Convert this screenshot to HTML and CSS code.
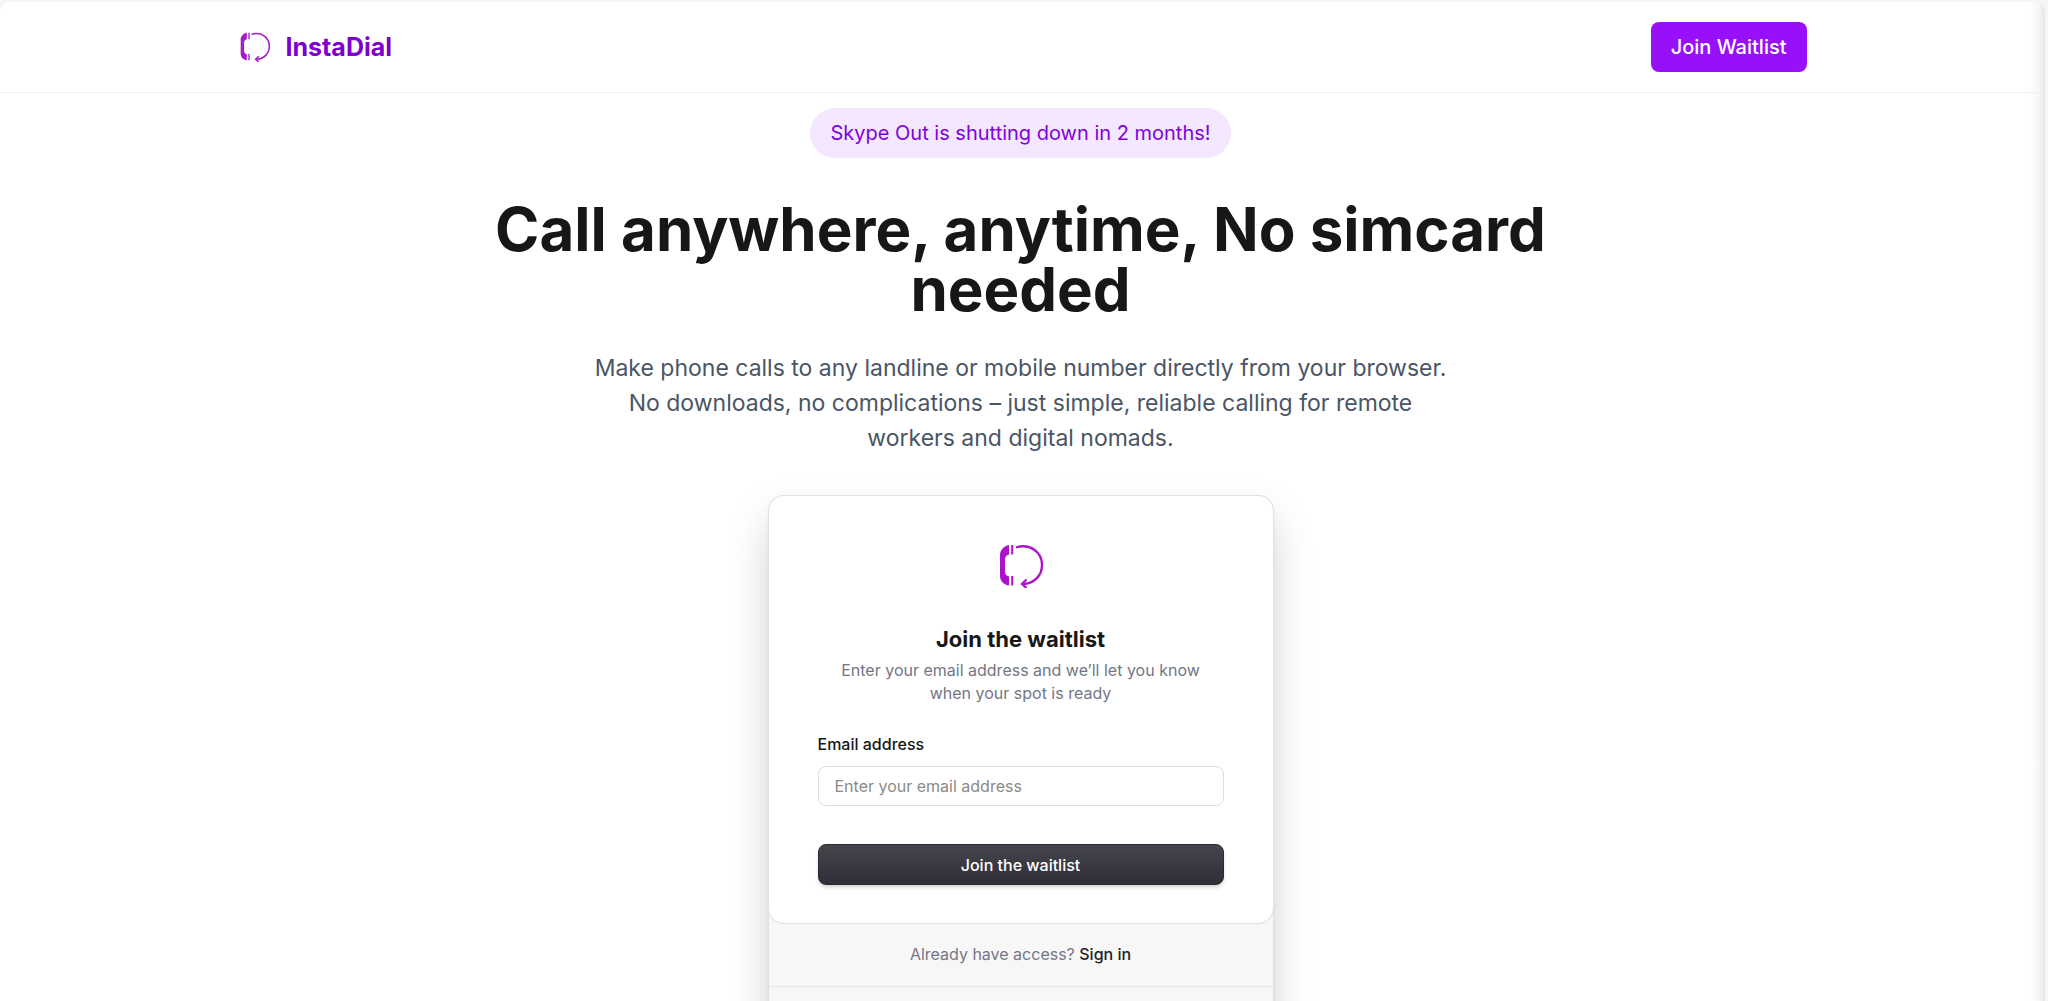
FILE: index.html
```
<!DOCTYPE html>
<html lang="en">
<head>
    <meta charset="UTF-8">
    <meta name="viewport" content="width=device-width, initial-scale=1.0">
    <title>InstaDial</title>
    <link rel="stylesheet" href="styles.css">
</head>
<body>

    <svg width="0" height="0" class="sprite" aria-hidden="true">
        <symbol id="logo" viewBox="0 0 44 44">
            <path d="M10 1v9.500q-4 1-4 5v12q0 4 4 5v9C5 41 1 37 1 32V11C1 6 5 2 10 1z" fill="currentColor"/>
            <path d="M13.200 1v9.500M13.200 32v9.500" fill="none" stroke="currentColor" stroke-width="2"/>
            <path d="M17 3.500C31-1 43 8 43 21c0 10-7 18-18 19" fill="none" stroke="currentColor" stroke-width="2.300"/>
            <path d="M27.500 35.500l-4.500 4.500 4.500 4" fill="none" stroke="currentColor" stroke-width="2.300"/>
        </symbol>
    </svg>

    <div class="page">
        <header class="header">
            <div class="container">
                <a href="#" class="brand">
                    <svg class="brand-logo"><use href="#logo"/></svg>
                    <span>InstaDial</span>
                </a>
                <button type="button" class="btn-waitlist">Join Waitlist</button>
            </div>
        </header>

        <main class="hero">
            <p class="pill">Skype Out is shutting down in 2 months!</p>
            <h1>Call anywhere, anytime, No simcard needed</h1>
            <p class="lead">Make phone calls to any landline or mobile number directly from your browser. No downloads, no complications – just simple, reliable calling for remote workers and digital nomads.</p>

            <!-- Waitlist card -->
            <div class="card">
                <form class="card-main">
                    <svg class="card-logo"><use href="#logo"/></svg>
                    <h2>Join the waitlist</h2>
                    <p class="card-text">Enter your email address and we’ll let you know when your spot is ready</p>
                    <label for="email">Email address</label>
                    <input type="email" id="email" placeholder="Enter your email address">
                    <button type="submit" class="btn-submit">Join the waitlist</button>
                </form>
                <p class="card-signin">Already have access? <a href="#">Sign in</a></p>
                <div class="card-footer"></div>
            </div>
        </main>
    </div>

</body>
</html>
```
FILE: styles.css
```
* {
    box-sizing: border-box;
}
body {
    margin: 0;
    padding: 2px 3px 0 0;
    height: 100vh;
    overflow: hidden;
    background: #f5f5f5;
    font-family: Inter, "Liberation Sans", sans-serif;
    color: #171717;
}
h1, h2, p {
    margin: 0;
}
button, input {
    font-family: inherit;
}
.sprite {
    position: absolute;
}
.page {
    height: 100%;
    padding-right: 4px;
    overflow: hidden;
    background: #fff linear-gradient(to right, #fff, #f7f7f7 60%, #e6e6e6) right / 16px 100% no-repeat;
    border-radius: 10px 10px 0 0;
}
.header {
    border-bottom: 1px solid #f0f0f0;
}
.container {
    display: flex;
    justify-content: space-between;
    align-items: center;
    max-width: 1612px;
    margin: 0 auto;
    padding: 20px;
}
.brand {
    display: flex;
    align-items: center;
    gap: 11px;
    color: #7e00cf;
    font-size: 25px;
    font-weight: 700;
    text-decoration: none;
}
.brand-logo {
    width: 40px;
    height: 40px;
    padding: 5px;
    color: #a51cc9;
}
.btn-waitlist {
    height: 50px;
    padding: 0 20px;
    border: none;
    border-radius: 8px;
    background: #9810fa;
    color: #fff;
    font-size: 20px;
    font-weight: 500;
    cursor: pointer;
}
.hero {
    display: flex;
    flex-direction: column;
    align-items: center;
    padding: 15px 20px 0;
    text-align: center;
}
.pill {
    padding: 10px 20px;
    border-radius: 25px;
    background: #f3e8ff;
    color: #8200db;
    font-size: 20px;
    line-height: 30px;
}
h1 {
    max-width: 1128px;
    margin-top: 41px;
    font-size: 60px;
    font-weight: 700;
    line-height: 60px;
}
.lead {
    max-width: 860px;
    margin-top: 32px;
    color: #4a5565;
    font-size: 23px;
    line-height: 35px;
}
.card {
    width: 504px;
    margin-top: 40px;
    border-radius: 15px;
    background: #f7f7f7;
    box-shadow: 0 0 0 1px #e0e0e0, 0 2px 3px rgba(0, 0, 0, 0.15), 0 20px 44px -6px rgba(0, 0, 0, 0.25);
}
.card-main {
    display: flex;
    flex-direction: column;
    padding: 40px 49px 38px;
    border-radius: 15px;
    background: #fff;
    box-shadow: 0 0 0 1px #e2e2e2;
    font-size: 16px;
}
.card-logo {
    align-self: center;
    width: 60px;
    height: 60px;
    padding: 8px;
    color: #ad14ca;
}
h2 {
    margin-top: 28px;
    font-size: 22px;
    font-weight: 700;
    line-height: 30px;
}
.card-text {
    margin-top: 5px;
    padding: 0 16px;
    color: #747686;
    line-height: 23px;
}
label {
    align-self: flex-start;
    margin: 28px 0 10px;
    font-weight: 500;
    line-height: 23px;
}
input {
    height: 40px;
    padding: 0 16px;
    border: 1px solid #dedede;
    border-radius: 8px;
    background: #fff;
    font-size: 16px;
}
input::placeholder {
    color: #8a8a8a;
}
.btn-submit {
    height: 41px;
    margin-top: 38px;
    border: 1px solid #2a2a30;
    border-radius: 8px;
    background: linear-gradient(#45464c, #2f2d38);
    box-shadow: 0 3px 4px -1px rgba(0, 0, 0, 0.2);
    color: #fff;
    font-size: 16px;
    font-weight: 500;
    cursor: pointer;
}
.card-signin {
    padding: 20px;
    border-bottom: 1px solid #e6e6e6;
    color: #747686;
    font-size: 16px;
    line-height: 23px;
}
.card-signin a {
    color: #212126;
    font-weight: 500;
    text-decoration: none;
}
.card-footer {
    height: 80px;
}
```
